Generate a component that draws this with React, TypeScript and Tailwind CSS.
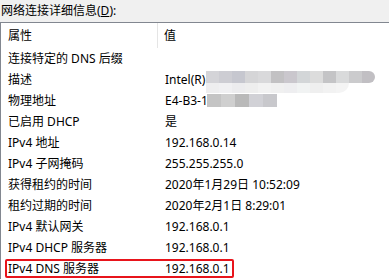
import React from "react";

const rows: { name: string; value: string }[] = [
  { name: "连接特定的 DNS 后缀", value: "" },
  { name: "描述", value: "Intel(R)" },
  { name: "物理地址", value: "E4-B3-1" },
  { name: "已启用 DHCP", value: "是" },
  { name: "IPv4 地址", value: "192.168.0.14" },
  { name: "IPv4 子网掩码", value: "255.255.255.0" },
  { name: "获得租约的时间", value: "2020年1月29日 10:52:09" },
  { name: "租约过期的时间", value: "2020年2月1日 8:29:01" },
  { name: "IPv4 默认网关", value: "192.168.0.1" },
  { name: "IPv4 DHCP 服务器", value: "192.168.0.1" },
  { name: "IPv4 DNS 服务器", value: "192.168.0.1" },
];

// mosaic colours (blurred-out parts of the screenshot)
const mosaicTop = ["#d4d4d8", "#cdcdd3", "#c6c7cf", "#d5d5d7", "#d9d9db", "#c2c1c3", "#cac7cd", "#d3d6d8", "#dcdcdc", "#c4c4c6", "#d9dadb", "#cbcbcd", "#c1bfc3"];
const mosaicMid = ["#eeeeef", "#f0f0f2", "#ececee", "#eeeeee", "#f2f2f2", "#f0f0f0", "#eeeef0", "#f1f3f3", "#efefef", "#f2f2f2", "#f4f4f4"];
const mosaicMac = ["#c4c4c4", "#cfcfcf", "#b9b9b9", "#d1d1d6", "#c8c8cc"];

export default function App() {
  return (
    <div
      className="relative w-[389px] h-[279px] overflow-hidden bg-white text-[12px] text-black"
      style={{ fontFamily: '"Noto Sans", "Noto Sans CJK SC", sans-serif' }}
    >
      {/* label */}
      <div className="h-[22px] bg-[#f0f0f0] px-[1px] pt-[3px] leading-[16px]">
        网络连接详细信息(<span className="underline">D</span>):
      </div>

      {/* list view */}
      <div className="border-l border-t border-[#828790] h-[257px]">
        <div className="flex h-[25px] items-center">
          <div className="w-[157px] pl-[7px] border-r border-[#e5e5e5] h-full flex items-center">属性</div>
          <div className="pl-[6px]">值</div>
        </div>
        {rows.map((r) => (
          <div key={r.name} className="flex h-[21px] items-center">
            <div className="w-[158px] pl-[7px] whitespace-nowrap">{r.name}</div>
            <div className="pl-[6px] whitespace-nowrap">{r.value}</div>
          </div>
        ))}
      </div>

      {/* blurred value, description row */}
      <div className="absolute left-[206px] top-[71px] flex rounded-r-[8px] overflow-hidden">
        {mosaicTop.map((c, i) => (
          <div key={i} className="w-[13px] h-[12px]" style={{ backgroundColor: c }} />
        ))}
      </div>
      <div className="absolute left-[206px] top-[83px] flex rounded-br-[10px] overflow-hidden">
        {mosaicMid.map((c, i) => (
          <div key={i} className="w-[13px] h-[10px]" style={{ backgroundColor: c }} />
        ))}
      </div>
      {/* blurred value, mac row */}
      <div className="absolute left-[207px] top-[94px] flex">
        {mosaicMac.map((c, i) => (
          <div key={i} className="w-[14px] h-[13px]" style={{ backgroundColor: c }} />
        ))}
      </div>

      {/* red highlight */}
      <div className="absolute left-[5px] top-[259px] w-[229px] h-[19px] border-2 border-[#e8141b] rounded-[2px]" />
    </div>
  );
}
